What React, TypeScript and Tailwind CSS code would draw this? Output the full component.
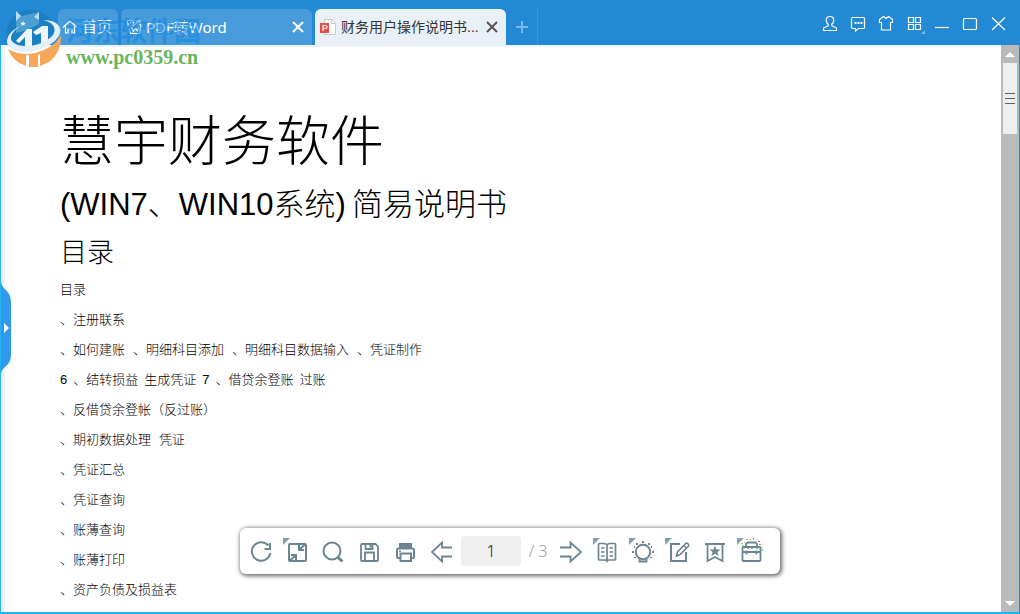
import React from "react";

type IconProps = { children: React.ReactNode };

const TopIcon = ({ children }: IconProps) => (
  <svg viewBox="0 0 28 28" className="h-7 w-7" fill="none" stroke="#fff" strokeWidth="1.2" aria-hidden="true">
    {children}
  </svg>
);

const ToolIcon = ({ children, menu }: IconProps & { menu?: boolean }) => (
  <svg viewBox="0 0 36 46" className="h-full w-9" fill="none" stroke="#6c8592" strokeWidth="2" aria-hidden="true">
    {menu && <path d="M4 10h7l-7 7z" fill="#83a0ae" stroke="none" />}
    {children}
  </svg>
);

const topTools = [
  {
    label: "用户",
    icon: (
      <path d="M14 6.500c-2.400 0-3.800 1.500-3.800 3.700 0 1.800.9 3.100 2 4.100v1.400l-4.700 2.300v2.500h13V18l-4.700-2.300v-1.400c1.100-1 2-2.300 2-4.100 0-2.200-1.400-3.700-3.800-3.700z" />
    ),
  },
  {
    label: "消息",
    icon: (
      <>
        <path d="M8.500 7.500h11q1 0 1 1v9q0 1-1 1h-5l-3 2.500v-2.500h-3q-1 0-1-1v-9q0-1 1-1z" />
        <path d="M10.500 12h2v2h-2zM13.500 12h2v2h-2zM16.500 12h2v2h-2z" fill="#fff" stroke="none" />
      </>
    ),
  },
  {
    label: "皮肤",
    icon: <path d="M11.500 6.500 7.500 9.500v3h2v7.500h9v-7.500h2v-3l-4-3-2.500 2-2.500-2z" />,
  },
  {
    label: "应用",
    icon: (
      <>
        <path d="M8.500 7.500h5v5h-5zM15.500 7.500h5v5h-5zM8.500 14.500h5v5h-5zM15.500 14.500h5v5h-5z" />
        <path d="M25 20v4h-4z" fill="#7fbbe8" stroke="none" />
      </>
    ),
  },
  { label: "最小化", icon: <path d="M7 17.500h14" /> },
  { label: "最大化", icon: <rect x="7.500" y="8.500" width="13" height="11" rx="1" /> },
  { label: "关闭", icon: <path d="M8 7.500l13 12.500M21 7.500L8 20" /> },
];

const leftTools = [
  {
    label: "旋转",
    icon: (
      <ToolIcon>
        <path d="M27.300 25a9.300 9.300 0 1 1-2-7.500M27 15v6h-5.500" />
      </ToolIcon>
    ),
  },
  {
    label: "适合窗口",
    icon: (
      <ToolIcon menu>
        <rect x="10" y="16" width="17" height="17" rx="1" />
        <path d="M20 17v5h5M20.500 21.500l5.500-5M12 27h5v5M16.500 27.500L11 32.500" />
      </ToolIcon>
    ),
  },
  {
    label: "搜索",
    icon: (
      <ToolIcon>
        <circle cx="17" cy="23" r="8.500" />
        <path d="M22.500 29l5 4.500" strokeWidth="3" />
      </ToolIcon>
    ),
  },
  {
    label: "保存",
    icon: (
      <ToolIcon>
        <path d="M11 16h13.500l2.500 2.500V32q0 1-1 1H11q-1 0-1-1V17q0-1 1-1zM14 33v-8.500h9V33M14.500 16v5h7v-5M19.500 17v2.500" strokeWidth="1.800" />
      </ToolIcon>
    ),
  },
  {
    label: "打印",
    icon: (
      <ToolIcon>
        <path d="M12 15h13v5H12z" fill="#6c8592" stroke="none" />
        <path d="M13 30h-2q-1 0-1-1v-7q0-1.500 1.500-1.500h14q1.500 0 1.500 1.500v7q0 1-1 1h-2M13.500 25.500h10.500V33H13.500z" />
        <path d="M12 22.500h2v1.500h-2z" fill="#6c8592" stroke="none" />
      </ToolIcon>
    ),
  },
  {
    label: "上一页",
    icon: (
      <ToolIcon>
        <path d="M29 19.500H19v-5L9 24l10 9.500v-5h10" strokeWidth="1.800" />
      </ToolIcon>
    ),
  },
];

const rightTools = [
  {
    label: "下一页",
    icon: (
      <ToolIcon>
        <path d="M7 19.500h10.500v-5L28 24l-10.500 9.500v-5H7" strokeWidth="1.800" />
      </ToolIcon>
    ),
  },
  {
    label: "阅读模式",
    icon: (
      <ToolIcon menu>
        <path
          d="M18 17q-1-1.500-3-1.500h-4.500q-1 0-1 1V31q0 1 1 1H16q1.500 0 2 1 .5-1 2-1h5.500q1 0 1-1V16.500q0-1-1-1H21q-2 0-3 1.500zM18 17v15M12 20h3.500M12 24h3.500M12 28h3.500M20.500 20H24M20.500 24H24M20.500 28H24"
          strokeWidth="1.700"
        />
      </ToolIcon>
    ),
  },
  {
    label: "护眼",
    icon: (
      <ToolIcon menu>
        <circle cx="18" cy="24" r="7.200" />
        <path d="M14.500 29.500v4h7v-4" strokeWidth="1.800" />
        <path d="M17 13h2v2h-2zM11 15h2v2h-2zM23 15h2v2h-2zM7 23h2v2H7zM27 23h2v2h-2zM9 18h1v2H9zM26 18h1v2h-1zM9 29h2v1H9zM25 29h2v1h-2z" fill="#6c8592" stroke="none" />
      </ToolIcon>
    ),
  },
  {
    label: "编辑",
    icon: (
      <ToolIcon menu>
        <path d="M19 16h-9v17h15v-9" />
        <path d="M15.500 28l1.200-4.300 8-8.200q1-.8 2 .1l.6.6q.9 1 0 2l-8 8.200zM23 17.500l2.800 2.800" strokeWidth="1.600" />
      </ToolIcon>
    ),
  },
  {
    label: "书签",
    icon: (
      <ToolIcon>
        <path d="M8 16h20M10.500 16v17l7.500-4 7.500 4V16" strokeWidth="1.800" />
        <path d="M18 17.500l1.500 4h4.200l-3.300 2.600 1.200 4-3.600-2.400-3.600 2.400 1.200-4-3.300-2.600h4.200z" fill="#6c8592" stroke="none" />
      </ToolIcon>
    ),
  },
  {
    label: "工具箱",
    icon: (
      <ToolIcon menu>
        <path d="M10.500 19h16q1 0 1 1v12q0 1-1 1h-16q-1 0-1-1V20q0-1 1-1zM13 18.500V16l1.500-1.500h8L24 16v2.500M9.500 24h18M13.500 22.500v4M23.500 22.500v4" strokeWidth="1.800" />
        <g stroke="none">
          <path d="M13 11h2v1h-2zM26 16h2v1h-2z" fill="#f07a5e" />
          <path d="M20 10h1v2h-1zM25 13h2v1h-2z" fill="#f0567f" />
          <path d="M16 11h2v1h-2zM8 15h2v1H8z" fill="#f0a33c" />
          <path d="M9 17h1v2H9zM29 21h1v2h-1zM18 20h2v1h-2z" fill="#4fe04f" />
          <path d="M11 14h1v1h-1zM23 20h2v1h-2z" fill="#62c8e8" />
          <path d="M28 19h1v1h-1zM14 20h2v1h-2z" fill="#c774e8" />
        </g>
      </ToolIcon>
    ),
  },
];

const lines: string[][] = [
  ["目录"],
  ["、注册联系"],
  ["、如何建账", "、明细科目添加", "、明细科目数据输入", "、凭证制作"],
  ["6", "、结转损益", "生成凭证", "7", "、借贷余登账", "过账"],
  ["、反借贷余登帐（反过账）"],
  ["、期初数据处理", "凭证"],
  ["、凭证汇总"],
  ["、凭证查询"],
  ["、账薄查询"],
  ["、账薄打印"],
  ["、资产负债及损益表"],
];

const Tool = ({ label, icon }: { label: string; icon: React.ReactNode }) => (
  <button type="button" aria-label={label} className="h-full w-9 shrink-0">
    {icon}
  </button>
);

const Header = () => (
  <header className="flex h-[45px] shrink-0 items-end bg-[#2489d5] pl-[58px] font-['Liberation_Sans','Noto_Sans_CJK_SC',sans-serif]">
    <nav className="flex h-9 items-stretch gap-[3px]">
      <button type="button" className="flex w-[60px] items-center gap-1 rounded-t-md bg-[#479bdb] pl-1 text-[15px] text-white">
        <svg viewBox="0 0 16 16" className="h-4 w-4 shrink-0" fill="none" stroke="#fff" strokeWidth="1.200" aria-hidden="true">
          <path d="M1 8.500L8 2l7 6.500M3.500 7.500V14H6v-4h4v4h2.500V7.500" />
        </svg>
        <span className="whitespace-nowrap">首页</span>
      </button>
      <div className="flex w-[191px] items-center rounded-t-md bg-[#479bdb] pr-1 pl-1 text-white">
        <svg viewBox="0 0 18 18" className="h-[18px] w-[18px] shrink-0" fill="none" stroke="#fff" strokeWidth="1.200" aria-hidden="true">
          <path d="M2 2.500h5l2 3M2 2.500l1.500 6M4.500 4.500h2M8 8l6-5M10.500 3H15v4M4 10.500l1.500 5h9l1.500-9M7 9.500l1 4 2.500-3 2 2.500L14 9" />
        </svg>
        <button type="button" className="ml-[3px] grow text-left font-['Noto_Sans','Noto_Sans_CJK_SC',sans-serif] text-[15px]">
          PDF转Word
        </button>
        <button type="button" aria-label="关闭标签" className="flex h-5 w-5 items-center justify-center">
          <svg viewBox="0 0 12 12" className="h-3 w-3" stroke="#fff" strokeWidth="2">
            <path d="M1 1l10 10M11 1L1 11" />
          </svg>
        </button>
      </div>
      <div className="flex w-[191px] items-center rounded-t-md bg-[#e9f0f7] pr-1 pl-1 text-[#333]">
        <svg viewBox="0 0 18 18" className="h-[18px] w-[18px] shrink-0" aria-hidden="true">
          <path d="M5.500 1.500h7l4 4v11h-11z" fill="#fff" stroke="#c9c9c9" />
          <path d="M12.500 1.500v4h4" fill="none" stroke="#c9c9c9" />
          <path d="M1 5h9v10H1z" fill="#ea4b4b" />
          <path d="M4 13V7.500h2.500q1.500 0 1.500 1.500t-1.500 1.500H4" fill="none" stroke="#fff" strokeWidth="1.200" />
        </svg>
        <button type="button" className="ml-1 grow text-left text-sm whitespace-nowrap">
          财务用户操作说明书...
        </button>
        <button type="button" aria-label="关闭标签" className="flex h-5 w-5 shrink-0 items-center justify-center">
          <svg viewBox="0 0 12 12" className="h-3 w-3" stroke="#555" strokeWidth="2">
            <path d="M1 1l10 10M11 1L1 11" />
          </svg>
        </button>
      </div>
    </nav>
    <button type="button" aria-label="新建标签" className="flex h-9 w-8 items-center justify-center border-r border-[#3b97db]">
      <svg viewBox="0 0 14 14" className="h-[14px] w-[14px]" stroke="#7db9e7" strokeWidth="2">
        <path d="M7 1v12M1 7h12" />
      </svg>
    </button>
    <div className="ml-auto flex self-start pt-[10px] pr-2">
      {topTools.map((t) => (
        <button key={t.label} type="button" aria-label={t.label} className="h-7 w-7">
          <TopIcon>{t.icon}</TopIcon>
        </button>
      ))}
    </div>
  </header>
);

const Watermark = () => (
  <div className="pointer-events-none absolute top-[9px] left-[5px] flex items-start">
    <svg viewBox="0 0 58 60" className="h-[60px] w-[58px]" aria-hidden="true">
      <path d="M3 34A24 24 0 0 1 48 16Q54 28 40 35 20 43 3 36z" fill="#1b80bf" opacity=".9" />
      <path d="M11 3l6 4 17-4v12l-12 6-11 3z" fill="#5aa6d6" opacity=".8" />
      <path d="M11 2l5 5-5 5zM34 3l-5 5 5 3z" fill="#b9dcf3" />
      <path d="M18 12l.8 1.700 1.800.2-1.300 1.300.3 1.800-1.600-.9-1.600.9.3-1.800-1.300-1.300 1.800-.2z" fill="#fff" />
      <path d="M3 40q12 7 27 4 17-4 26-17 0 17-12 26l-9 4V45l-2 1v12h-9V46l-3 .2V57Q8 53 3 40z" fill="#f6a75a" />
      <path d="M11 32l11-12h5v18h-7V28l-6 6zM28 23l9-6h6v18l-7 3V24l-5 2z" fill="#eef6fc" />
      <path
        d="M16 17Q2 23 2 33q1 9 16 10 19 0 32-11 8-8 4-15-4-6-16-6 9 2 11 7 3 7-7 13-11 7-24 6Q5 35 6 28q1-6 10-11z"
        fill="#e3f0f9"
      />
    </svg>
    <div className="ml-[3px] flex flex-col">
      <span className="mt-1 font-['Noto_Sans_CJK_SC',sans-serif] text-[27px] leading-[34px] font-bold whitespace-nowrap text-[#0a84e4] opacity-50">
        河东软件园
      </span>
      <span className="font-['Liberation_Serif',serif] text-xl leading-5 font-bold whitespace-nowrap text-[#69b45c]">
        www.pc0359.cn
      </span>
    </div>
  </div>
);

const Scrollbar = () => (
  <div className="flex w-[18px] shrink-0 flex-col items-center bg-[#bababa]" role="presentation">
    <svg viewBox="0 0 18 18" className="h-[18px] w-[18px] shrink-0" aria-hidden="true">
      <path d="M4 12l5-5 5 5z" fill="#fff" />
    </svg>
    <div className="flex h-[71px] w-[14px] flex-col items-center justify-center gap-1 bg-[#eee]">
      <span className="h-px w-[10px] bg-[#606060]" />
      <span className="h-px w-[10px] bg-[#606060]" />
      <span className="h-px w-[10px] bg-[#606060]" />
    </div>
    <svg viewBox="0 0 18 18" className="mt-auto h-[18px] w-[18px] shrink-0" aria-hidden="true">
      <path d="M4 7l5 5 5-5z" fill="#fff" />
    </svg>
  </div>
);

const Toolbar = () => (
  <div className="absolute bottom-[38px] left-1/2 flex h-[46px] -translate-x-1/2 items-center rounded-md bg-white pr-[11px] pl-[3px] shadow-[1px_1px_4px_1px_rgba(0,0,0,0.6)]">
    {leftTools.map((t) => (
      <Tool key={t.label} {...t} />
    ))}
    <input
      aria-label="页码"
      defaultValue="1"
      className="mx-[2px] h-[30px] w-[60px] rounded bg-[#efefef] text-center font-['Noto_Sans',sans-serif] text-base font-light text-[#222]"
    />
    <span className="flex w-[30px] justify-center gap-1 font-['Noto_Sans',sans-serif] text-base font-light text-[#a0a0a0]">
      <span>/</span>
      <span>3</span>
    </span>
    {rightTools.map((t) => (
      <Tool key={t.label} {...t} />
    ))}
  </div>
);

export default function App() {
  return (
    <div className="relative flex h-screen flex-col overflow-hidden bg-white">
      <Header />
      <div className="relative flex min-h-0 grow border-r border-b-2 border-l border-r-[#2489d5] border-b-[#22b4f0] border-l-[#22b4f0]">
        <main className="min-w-0 grow overflow-hidden border-t-2 border-l-4 border-[#edf4f9] pl-[55px] font-['Liberation_Sans','Noto_Sans_CJK_SC',sans-serif] font-light text-black">
          <h1 className="pt-[60px] text-[54px] leading-[70px]">慧宇财务软件</h1>
          <h2 className="flex gap-[6px] pt-[6px] text-[31px] leading-[44px]">
            <span>(WIN7、WIN10系统)</span>
            <span>简易说明书</span>
          </h2>
          <h2 className="pt-[6px] text-[27px] leading-[40px]">目录</h2>
          <div className="pt-[2px] text-[13px] leading-[30px]">
            {lines.map((parts, i) => (
              <p key={i} className={parts[0] === "6" ? "flex gap-[6px]" : "flex gap-2"}>
                {parts.map((part) => (
                  <span key={part} className="whitespace-nowrap">
                    {part}
                  </span>
                ))}
              </p>
            ))}
          </div>
        </main>
        <Scrollbar />
        <button type="button" aria-label="展开侧栏" className="absolute top-[237px] left-0 h-[92px] w-[10px]">
          <svg viewBox="0 0 10 92" className="h-full w-full" aria-hidden="true">
            <path d="M0 0q1 5 5 8 5 5 5 13v52q0 7-5 11-4 3-5 8z" fill="#309aea" />
            <path d="M3 41l5 5-5 5z" fill="#fff" />
          </svg>
        </button>
        <Toolbar />
      </div>
      <Watermark />
    </div>
  );
}
